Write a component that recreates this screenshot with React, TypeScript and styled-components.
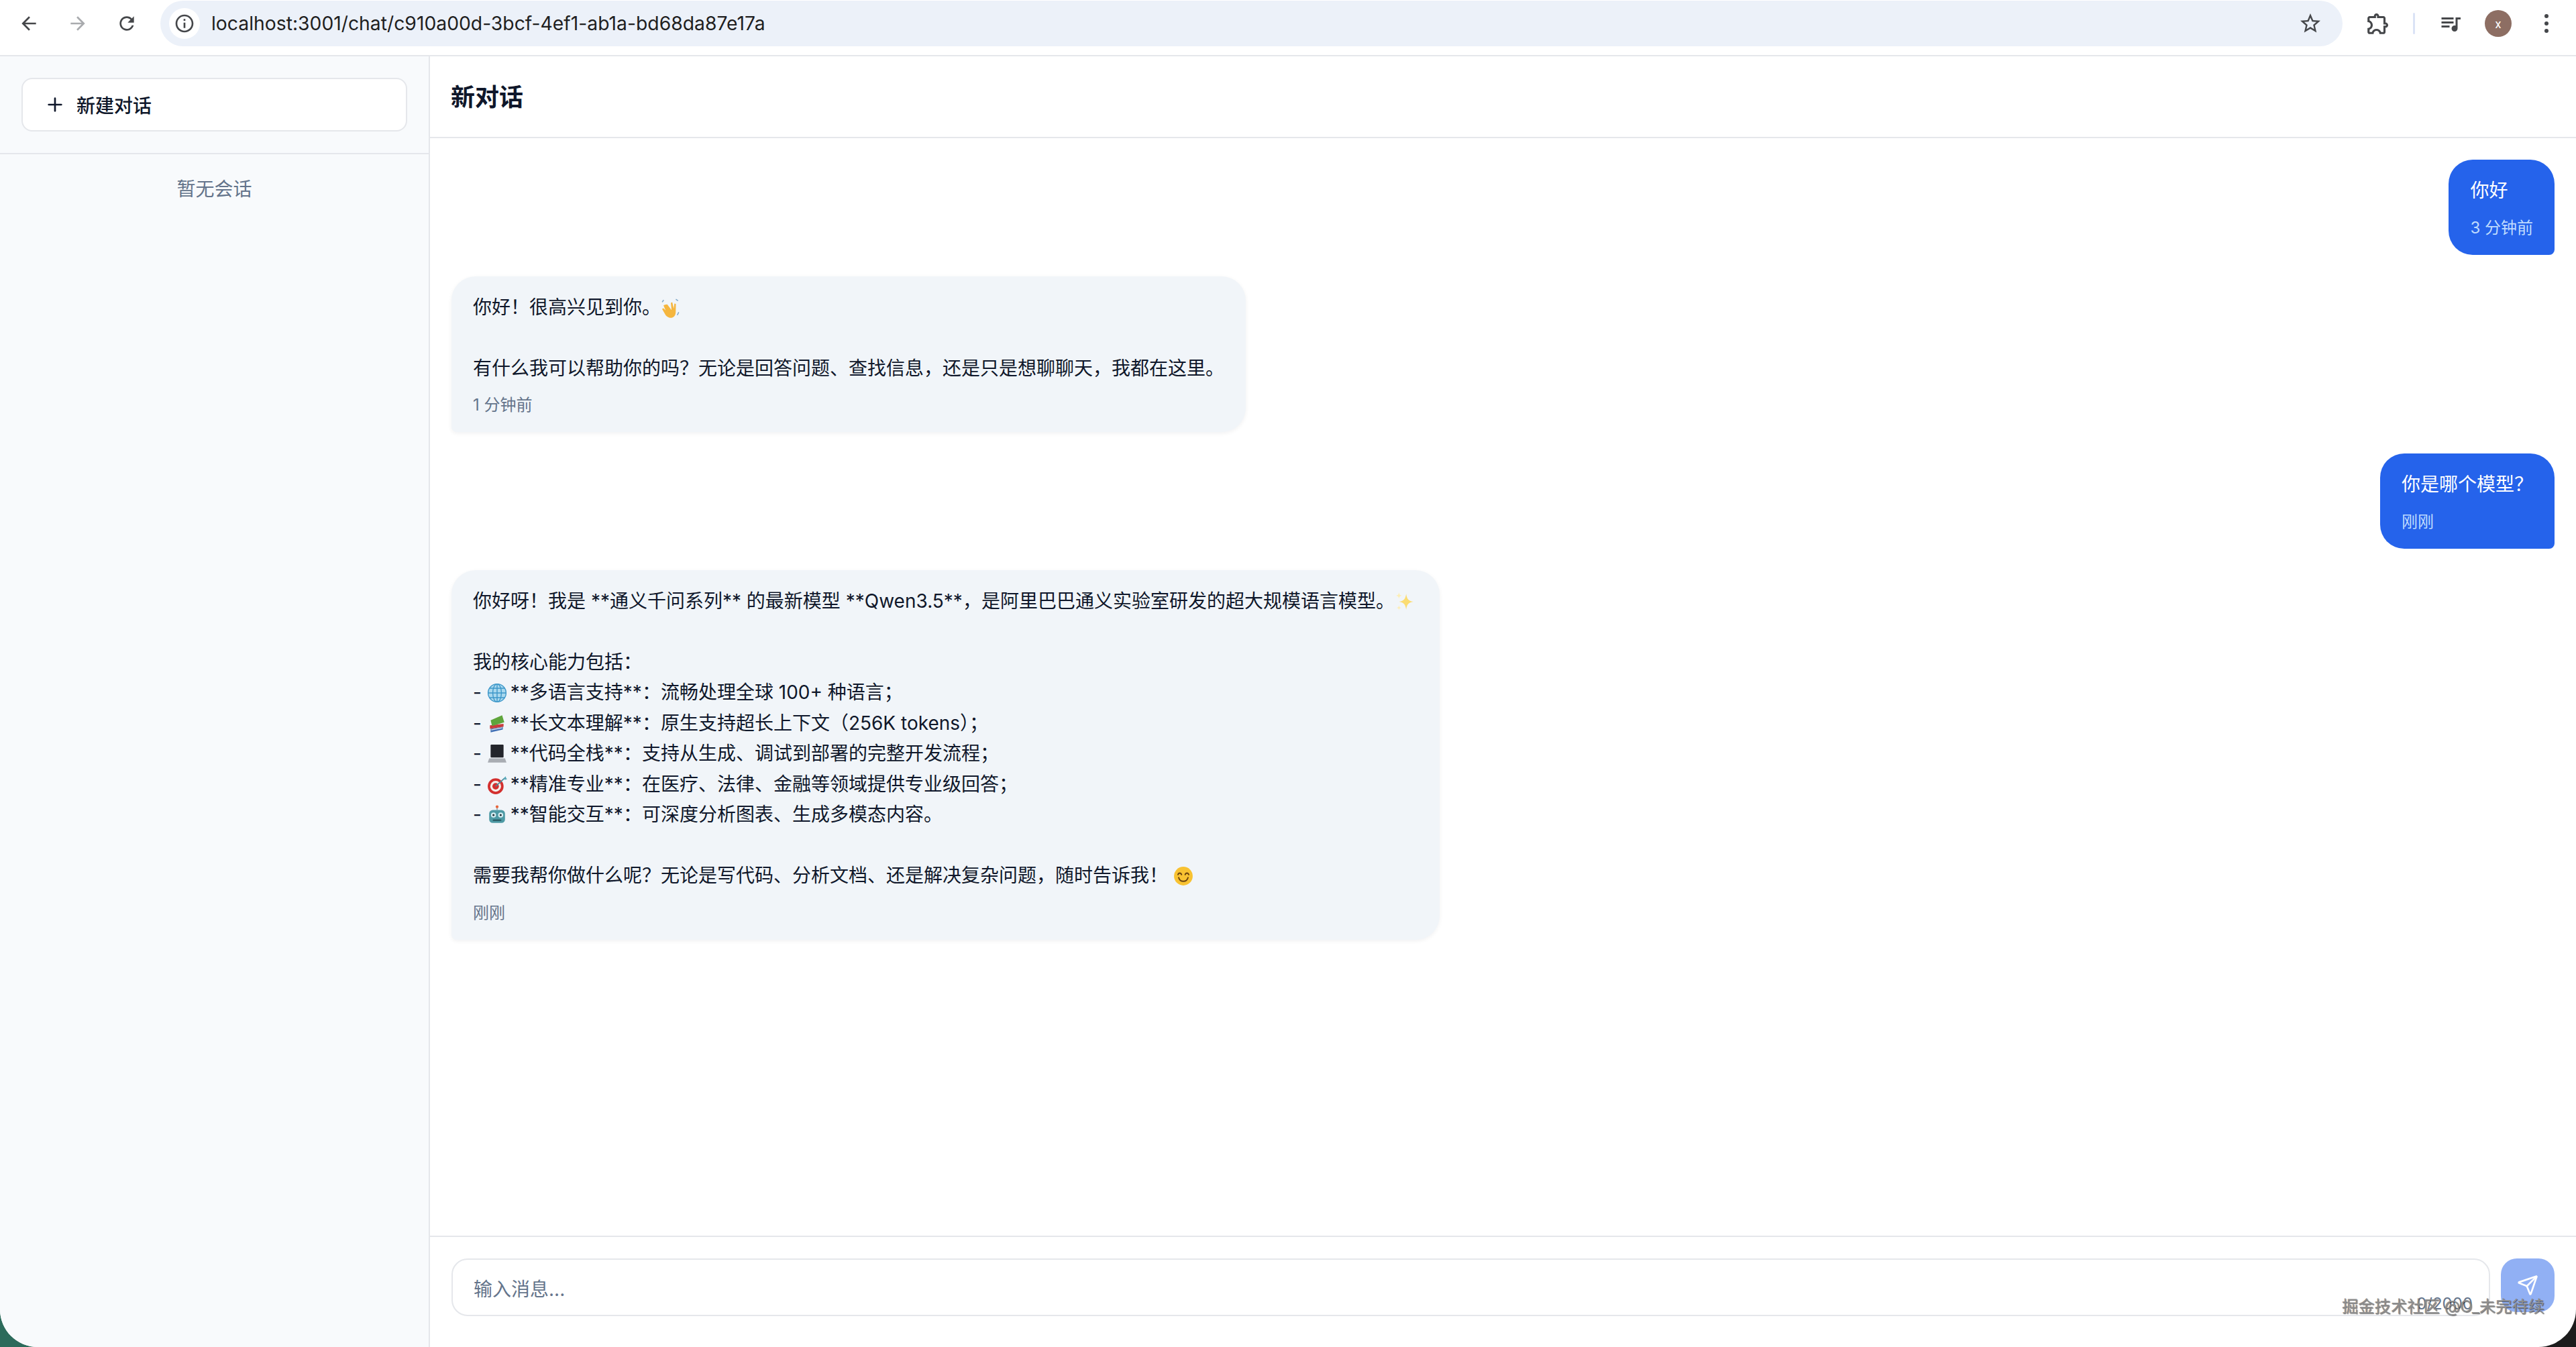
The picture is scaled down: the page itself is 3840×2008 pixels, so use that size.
import React from 'react'
import styled, { createGlobalStyle } from 'styled-components'
import { Plus, Send } from 'lucide-react'

const GlobalStyle = createGlobalStyle`
  html, body {
    margin: 0;
    padding: 0;
    height: 100%;
    background: linear-gradient(to right, #2c6b5b 0, #2c6b5b 60px, #1c1c1c 62px, #1c1c1c 100%);
  }
  #root {
    height: 100%;
  }
  * {
    box-sizing: border-box;
  }
`

const Page = styled.div`
  position: relative;
  display: flex;
  flex-direction: column;
  height: 2008px;
  overflow: hidden;
  background: #fff;
  border-bottom-left-radius: 56px;
  border-bottom-right-radius: 56px;
  font-family: Inter, 'Noto Sans CJK SC', sans-serif;
  color: #0f172a;
`

/* browser bar */
const Toolbar = styled.div`
  display: flex;
  align-items: center;
  flex: none;
  height: 84px;
  padding: 0 40px 12px 27px;
  border-bottom: 2px solid #e5e7eb;
  background: #fff;
`

const ToolIcon = styled.svg<{ $muted?: boolean }>`
  flex: none;
  fill: ${(props) => (props.$muted ? '#a9abae' : '#45474a')};
`

const NavGroup = styled.div`
  display: flex;
  align-items: center;
  gap: 41px;
  margin-right: 34px;
`

const UrlBar = styled.div`
  display: flex;
  align-items: center;
  flex: 1;
  height: 68px;
  padding: 0 30px 0 13px;
  border-radius: 34px;
  background: #ecf1f9;
`

const InfoBadge = styled.div`
  display: flex;
  align-items: center;
  justify-content: center;
  width: 46px;
  height: 46px;
  border-radius: 50%;
  background: #fff;
`

const UrlText = styled.div`
  flex: 1;
  margin-left: 17px;
  font-family: Inter, 'Liberation Sans', sans-serif;
  font-size: 28.3px;
  color: #1f1f1f;
`

const ToolActions = styled.div`
  display: flex;
  align-items: center;
  margin-left: 34px;
`

const Separator = styled.div`
  width: 3px;
  height: 32px;
  margin: 0 35px 0 33px;
  border-radius: 2px;
  background: #dbe3f6;
`

const Avatar = styled.div`
  display: flex;
  align-items: center;
  justify-content: center;
  width: 40px;
  height: 40px;
  margin: 0 48px 0 33px;
  border-radius: 50%;
  background: #8d6e63;
  font-family: Roboto, sans-serif;
  font-size: 18px;
  color: #fff;
`

/* app */
const Main = styled.div`
  display: flex;
  flex: 1;
  min-height: 0;
`

const Sidebar = styled.aside`
  display: flex;
  flex-direction: column;
  flex: none;
  width: 641px;
  border-right: 2px solid #e5e7eb;
  background: #f8fafc;
`

const SidebarTop = styled.div`
  padding: 32px;
  border-bottom: 2px solid #e5e7eb;
`

const NewChatButton = styled.button`
  display: flex;
  align-items: center;
  gap: 16px;
  width: 100%;
  height: 80px;
  padding: 0 32px;
  border: 2px solid #e5e7eb;
  border-radius: 16px;
  background: #fff;
  font-family: inherit;
  font-size: 28px;
  font-weight: 500;
  color: #0f172a;
`

const EmptyText = styled.div`
  padding-top: 32px;
  font-size: 28px;
  line-height: 40px;
  text-align: center;
  color: #64748b;
`

const ChatPane = styled.main`
  display: flex;
  flex-direction: column;
  flex: 1;
  min-width: 0;
`

const ChatHeader = styled.header`
  display: flex;
  align-items: center;
  flex: none;
  height: 122px;
  padding: 0 31px 4px;
  border-bottom: 2px solid #e5e7eb;
`

const ChatTitle = styled.h1`
  margin: 0;
  font-size: 36px;
  font-weight: 600;
  color: #0f172a;
`

const MessageList = styled.div`
  display: flex;
  flex-direction: column;
  flex: 1;
  gap: 32px;
  min-height: 0;
  padding: 32px;
`

const Bubble = styled.div<{ $mine?: boolean }>`
  align-self: ${(props) => (props.$mine ? 'flex-end' : 'flex-start')};
  padding: 24px 32px;
  border-radius: ${(props) => (props.$mine ? '36px 36px 8px 36px' : '36px 36px 36px 8px')};
  background: ${(props) => (props.$mine ? '#2563eb' : '#f1f5f9')};
  color: ${(props) => (props.$mine ? '#fff' : '#0f172a')};
  box-shadow: ${(props) => (props.$mine ? 'none' : '0 2px 6px rgba(15, 23, 42, 0.06)')};
`

const MessageText = styled.div`
  font-size: 28px;
  line-height: 45.5px;
  white-space: pre-wrap;
`

const MessageTime = styled.div<{ $mine?: boolean }>`
  margin-top: 16px;
  font-size: 24px;
  line-height: 32px;
  color: ${(props) => (props.$mine ? '#bfdbfe' : '#64748b')};
`

const Composer = styled.div`
  display: flex;
  flex: none;
  gap: 16px;
  height: 166px;
  padding: 32px;
  border-top: 2px solid #e5e7eb;
`

const InputBox = styled.div`
  position: relative;
  display: flex;
  align-items: center;
  flex: 1;
  height: 86px;
  padding: 2px 31px 0;
  border: 2px solid #e5e7eb;
  border-radius: 24px;
  font-size: 28px;
  color: #64748b;
`

const Counter = styled.span`
  position: absolute;
  right: 24px;
  bottom: 2px;
  font-size: 24px;
  color: #64748b;
`

const SendButton = styled.button`
  display: flex;
  align-items: center;
  justify-content: center;
  flex: none;
  width: 80px;
  height: 80px;
  padding: 0;
  border: none;
  border-radius: 24px;
  background: #2563eb;
  opacity: 0.5;
  color: #fff;
`

const Watermark = styled.div`
  position: absolute;
  right: 47px;
  bottom: 44px;
  font-size: 24.3px;
  line-height: 34px;
  color: #8e8e8e;
  text-shadow: 1px 1px 1px rgba(0, 0, 0, 0.55);
`

const EmojiIcon = styled.svg`
  display: inline-block;
  width: 30px;
  height: 30px;
  margin: 0 5px 0 0;
  vertical-align: -6px;
`

/* hand drawn stand-ins for the system emoji */
const Wave = () => (
  <EmojiIcon viewBox="0 0 28 28">
    <path d="M9 9l6 8-1-10 2-1 2 9 1-7 2 .5-.2 11c0 6-4 9-9 8-3-.6-5-3-6-5l-4-7 2-1 3 3-3-7 2-1z" fill="#f5b63f" />
    <path d="M4 3L2 6M25 20l-2 4M21 2l3 2" stroke="#7da6c9" strokeWidth="1.4" fill="none" />
  </EmojiIcon>
)

const Sparkles = () => (
  <EmojiIcon viewBox="0 0 28 28">
    <path d="M16 3c1 7 3 10 10 11-7 1-9 4-10 11-1-7-3-10-10-11 7-1 9-4 10-11z" fill="#fbdc72" />
    <path d="M6 1c.5 3 1 4 4 4.500C7 6 6.500 7 6 10c-.5-3-1-4-4-4.500C5 5 5.500 4 6 1zM6 19c.4 2.500 1 3.200 3.500 3.500C7 23 6.400 23.500 6 26c-.4-2.500-1-3-3.500-3.500C5 22.200 5.600 21.500 6 19z" fill="#fdeeb5" />
  </EmojiIcon>
)

const Globe = () => (
  <EmojiIcon viewBox="0 0 28 28">
    <circle cx="14" cy="14" r="12.500" fill="#a9d8ee" />
    <g fill="none" stroke="#3d97c9" strokeWidth="1.300">
      <circle cx="14" cy="14" r="12.500" />
      <ellipse cx="14" cy="14" rx="6" ry="12.500" />
      <path d="M14 1.500v25M1.500 14h25M3.500 7.500h21M3.500 20.500h21" />
    </g>
  </EmojiIcon>
)

const Books = () => (
  <EmojiIcon viewBox="0 0 28 28">
    <path d="M5 21l17-3v4L5 26z" fill="#3f6fb5" />
    <path d="M4 16l19-2v4L4 21z" fill="#c93c3c" />
    <path d="M5 9L21 2l3 10-17 5z" fill="#5fa53c" />
    <path d="M6 22.500l15-3" stroke="#e7e7e7" strokeWidth="1" />
  </EmojiIcon>
)

const Laptop = () => (
  <EmojiIcon viewBox="0 0 28 28">
    <rect x="5" y="1" width="18" height="18" rx="1" fill="#23252b" />
    <path d="M3 20h22l2 6H1z" fill="#a9adb3" />
  </EmojiIcon>
)

const Target = () => (
  <EmojiIcon viewBox="0 0 28 28">
    <circle cx="12" cy="16" r="11" fill="#d3302f" />
    <circle cx="12" cy="16" r="7.500" fill="#f4efe9" />
    <circle cx="12" cy="16" r="4.500" fill="#d3302f" />
    <path d="M12 16L24 5" stroke="#4b8b9b" strokeWidth="1.600" />
    <path d="M23 5l3-3 .5 2.500L28 6l-3 1z" fill="#58a8b9" />
  </EmojiIcon>
)

const Robot = () => (
  <EmojiIcon viewBox="0 0 28 28">
    <path d="M14 1v6" stroke="#a8b4ba" strokeWidth="2" />
    <circle cx="14" cy="2.500" r="2" fill="#e9653b" />
    <rect x="3" y="7" width="22" height="18" rx="5" fill="#4e9aa5" />
    <circle cx="9" cy="14" r="3.500" fill="#d6eef2" />
    <circle cx="19" cy="14" r="3.500" fill="#d6eef2" />
    <circle cx="9" cy="14" r="1.500" fill="#24323a" />
    <circle cx="19" cy="14" r="1.500" fill="#24323a" />
    <rect x="8" y="20" width="12" height="2.500" rx="1" fill="#2b5f68" />
  </EmojiIcon>
)

const Smile = () => (
  <EmojiIcon viewBox="0 0 28 28">
    <circle cx="14" cy="14" r="13" fill="#f8c232" />
    <path d="M6.500 12c1-3 4-3 5 0M16.500 12c1-3 4-3 5 0M7.500 16c2 7 11 7 13 0" fill="none" stroke="#6b4310" strokeWidth="1.800" strokeLinecap="round" />
  </EmojiIcon>
)

export default function App() {
  return (
    <Page>
      <GlobalStyle />
      <Toolbar>
        <NavGroup>
          <ToolIcon viewBox="0 0 24 24" width="32" height="32">
            <path d="M20 11H7.830l5.590-5.590L12 4l-8 8 8 8 1.410-1.410L7.830 13H20v-2z" />
          </ToolIcon>
          <ToolIcon $muted viewBox="0 0 24 24" width="32" height="32">
            <path d="M4 11h12.170l-5.590-5.590L12 4l8 8-8 8-1.410-1.410L16.170 13H4v-2z" />
          </ToolIcon>
          <ToolIcon viewBox="0 0 24 24" width="32" height="32">
            <path d="M17.650 6.350C16.200 4.900 14.210 4 12 4c-4.420 0-7.990 3.580-7.990 8s3.570 8 7.990 8c3.730 0 6.840-2.550 7.730-6h-2.080c-.82 2.330-3.040 4-5.650 4-3.310 0-6-2.690-6-6s2.690-6 6-6c1.660 0 3.140.69 4.220 1.780L13 11h7V4l-2.350 2.350z" />
          </ToolIcon>
        </NavGroup>
        <UrlBar>
          <InfoBadge>
            <ToolIcon viewBox="0 0 24 24" width="32" height="32">
              <path d="M11 7h2v2h-2zm0 4h2v6h-2zm1-9C6.480 2 2 6.480 2 12s4.480 10 10 10 10-4.480 10-10S17.520 2 12 2zm0 18c-4.410 0-8-3.590-8-8s3.590-8 8-8 8 3.590 8 8-3.590 8-8 8z" />
            </ToolIcon>
          </InfoBadge>
          <UrlText>localhost:3001/chat/c910a00d-3bcf-4ef1-ab1a-bd68da87e17a</UrlText>
          <ToolIcon viewBox="0 0 24 24" width="36" height="36">
            <path d="M22 9.240l-7.190-.62L12 2 9.190 8.630 2 9.240l5.460 4.730L5.820 21 12 17.270 18.180 21l-1.630-7.030L22 9.240zM12 15.400l-3.760 2.270 1-4.280-3.320-2.880 4.380-.38L12 6.100l1.710 4.040 4.380.38-3.320 2.880 1 4.280L12 15.400z" />
          </ToolIcon>
        </UrlBar>
        <ToolActions>
          <ToolIcon viewBox="0 0 24 24" width="38" height="38">
            <path d="M10.500 4.500c.28 0 .5.22.5.5v2h6v6h2c.28 0 .5.22.5.5s-.22.5-.5.5h-2v6h-2.120c-.68-1.750-2.390-3-4.380-3s-3.700 1.250-4.380 3H4v-2.120c1.750-.68 3-2.390 3-4.380 0-1.990-1.240-3.700-2.990-4.380L4 7h6V5c0-.28.22-.5.5-.5m0-2C9.120 2.500 8 3.620 8 5H4c-1.100 0-1.990.9-1.990 2v3.800h.29c1.490 0 2.700 1.210 2.700 2.700s-1.210 2.700-2.700 2.700H2V20c0 1.100.9 2 2 2h3.800v-.3c0-1.490 1.210-2.700 2.700-2.700s2.700 1.210 2.700 2.700v.3H17c1.100 0 2-.9 2-2v-4c1.380 0 2.500-1.120 2.500-2.500S20.380 11 19 11V7c0-1.100-.9-2-2-2h-4c0-1.380-1.120-2.500-2.500-2.500z" />
          </ToolIcon>
          <Separator />
          <ToolIcon viewBox="0 0 24 24" width="36" height="36">
            <path d="M15 6H3v2h12V6zm0 4H3v2h12v-2zM3 16h8v-2H3v2zM17 6v8.180c-.31-.11-.65-.18-1-.18-1.660 0-3 1.340-3 3s1.340 3 3 3 3-1.340 3-3V8h3V6h-5z" />
          </ToolIcon>
          <Avatar>x</Avatar>
          <ToolIcon viewBox="0 0 8 32" width="8" height="32">
            <circle cx="4" cy="5" r="3" />
            <circle cx="4" cy="16" r="3" />
            <circle cx="4" cy="27" r="3" />
          </ToolIcon>
        </ToolActions>
      </Toolbar>

      <Main>
        <Sidebar>
          <SidebarTop>
            <NewChatButton>
              <Plus size={32} />
              新建对话
            </NewChatButton>
          </SidebarTop>
          <EmptyText>暂无会话</EmptyText>
        </Sidebar>

        <ChatPane>
          <ChatHeader>
            <ChatTitle>新对话</ChatTitle>
          </ChatHeader>

          <MessageList>
            <Bubble $mine>
              <MessageText>你好</MessageText>
              <MessageTime $mine>3 分钟前</MessageTime>
            </Bubble>

            <Bubble>
              <MessageText>
                你好！很高兴见到你。
                <Wave />
                {'\n\n'}有什么我可以帮助你的吗？无论是回答问题、查找信息，还是只是想聊聊天，我都在这里。
              </MessageText>
              <MessageTime>1 分钟前</MessageTime>
            </Bubble>

            <Bubble $mine>
              <MessageText>你是哪个模型？</MessageText>
              <MessageTime $mine>刚刚</MessageTime>
            </Bubble>

            <Bubble>
              <MessageText>
                你好呀！我是 **通义千问系列** 的最新模型 **Qwen3.5**，是阿里巴巴通义实验室研发的超大规模语言模型。
                <Sparkles />
                {'\n\n'}我的核心能力包括：{'\n'}- <Globe />**多语言支持**：流畅处理全球 100+ 种语言；{'\n'}- <Books />**长文本理解**：原生支持超长上下文（256K tokens）；{'\n'}- <Laptop />**代码全栈**：支持从生成、调试到部署的完整开发流程；{'\n'}- <Target />**精准专业**：在医疗、法律、金融等领域提供专业级回答；{'\n'}- <Robot />**智能交互**：可深度分析图表、生成多模态内容。{'\n\n'}需要我帮你做什么呢？无论是写代码、分析文档、还是解决复杂问题，随时告诉我！ <Smile />
              </MessageText>
              <MessageTime>刚刚</MessageTime>
            </Bubble>
          </MessageList>

          <Composer>
            <InputBox>
              输入消息...
              <Counter>0/2000</Counter>
            </InputBox>
            <SendButton aria-label="Send">
              <Send size={32} />
            </SendButton>
          </Composer>
        </ChatPane>
      </Main>
      <Watermark>掘金技术社区 @O_未完待续</Watermark>
    </Page>
  )
}
